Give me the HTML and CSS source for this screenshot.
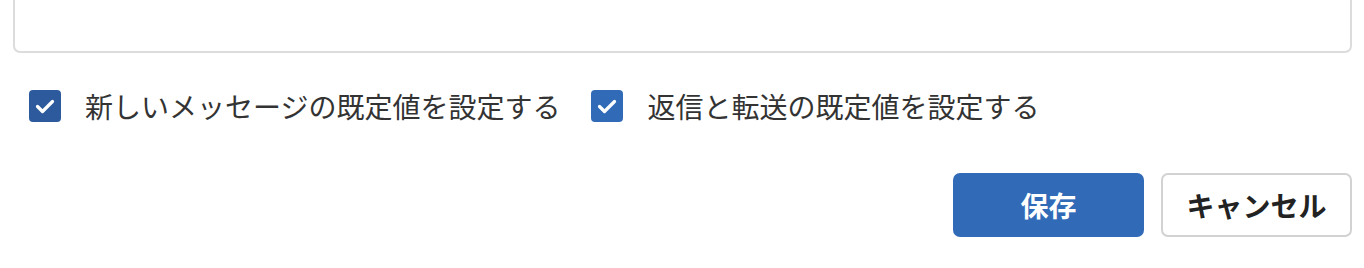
FILE: index.html
```html
<!DOCTYPE html>
<html lang="ja">
<head>
  <meta charset="UTF-8">
  <meta name="viewport" content="width=device-width,initial-scale=1.0">
  <title>既定値の設定</title>
  <link rel="stylesheet" href="styles.css">
</head>
<body>
  <main class="settings">
    <!-- 署名の入力欄 -->
    <textarea class="sig-box"></textarea>

    <!-- 既定値チェック -->
    <div class="options">
      <label class="check">
        <span class="box box-focus">
          <svg viewBox="0 0 32 32" width="32" height="32"><path d="M8.5 16.5 L13.5 21.5 L23.5 11.5" fill="none" stroke="#fff" stroke-width="3.2" stroke-linecap="round" stroke-linejoin="round"/></svg>
        </span>
        <span class="label-text">新しいメッセージの既定値を設定する</span>
      </label>
      <label class="check">
        <span class="box">
          <svg viewBox="0 0 32 32" width="32" height="32"><path d="M8.5 16.5 L13.5 21.5 L23.5 11.5" fill="none" stroke="#fff" stroke-width="3.2" stroke-linecap="round" stroke-linejoin="round"/></svg>
        </span>
        <span class="label-text">返信と転送の既定値を設定する</span>
      </label>
    </div>

    <!-- ボタン -->
    <div class="actions">
      <button class="btn btn-primary">保存</button>
      <button class="btn btn-default">キャンセル</button>
    </div>
  </main>
</body>
</html>
```

FILE: styles.css
```css
/* ——— 全体 ——— */
:root {
  --fg: #262626;
  --border: #dcdcdc;
  --primary: #316bb8;
  --primary-dark: #2c5a9d;
}
html, body { margin:0; background:#fff; }
body {
  font-family:"Noto Sans CJK JP","Noto Sans",sans-serif;
  color:var(--fg);
}
.settings {
  padding:0 12px 0 13px;
  display:flex; flex-direction:column;
}
.sig-box {
  display:block; box-sizing:border-box;
  width:100%; height:93px; margin:-40px 0 0;
  border:2px solid var(--border); border-radius:7px;
  resize:none; background:#fff;
}

/* ——— チェックボックス ——— */
.options {
  display:flex; align-items:center; gap:31px;
  margin-top:37px; padding-left:16px;
}
.check { display:flex; align-items:center; gap:24px; cursor:pointer; }
.box {
  width:32px; height:32px; border-radius:4px;
  background:var(--primary); display:flex;
}
.box-focus { background:var(--primary-dark); }
.label-text {
  font-size:28px; line-height:32px; color:#333;
}

/* ——— ボタン ——— */
.actions {
  display:flex; justify-content:flex-end; gap:17px;
  margin-top:51px;
}
.btn {
  box-sizing:border-box; width:191px; height:64px;
  border-radius:7px; font-family:inherit;
  font-size:28px; font-weight:700; cursor:pointer;
}
.btn-primary {
  background:var(--primary); color:#fff; border:none;
}
.btn-default {
  background:#fff; color:#222;
  border:2px solid #d2d2d2;
}
```
